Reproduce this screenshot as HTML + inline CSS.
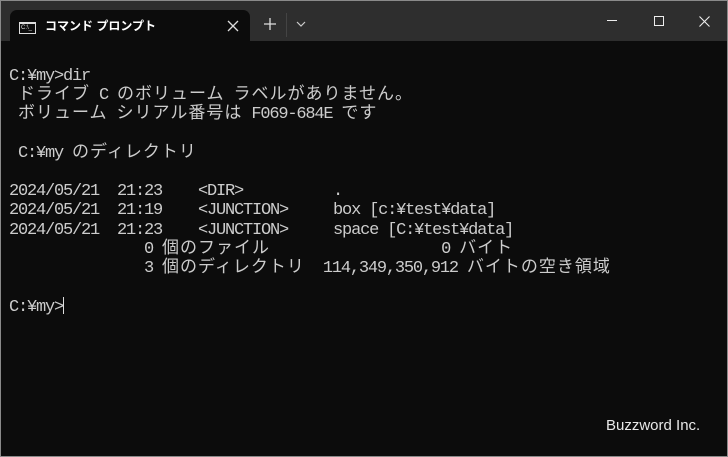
<!DOCTYPE html>
<html><head><meta charset="utf-8"><style>
html,body{margin:0;padding:0}
body{width:728px;height:457px;background:#0c0c0c;position:relative;overflow:hidden;font-family:"Liberation Mono","Noto Sans CJK JP",monospace}
.frame{position:absolute;left:0;top:0;width:726px;height:455px;border:1px solid #8a8a8a;}
.title{position:absolute;left:1px;top:1px;width:726px;height:40px;background:#2e2e2e}
.tab{position:absolute;left:9px;top:9px;width:240px;height:32px;background:#0c0c0c;border-radius:7px 7px 0 0}
.tab .t{position:absolute;left:35px;top:7px;color:#fff;font:bold 12px "Liberation Sans","Noto Sans CJK JP",sans-serif}
.icon{position:absolute;left:9px;top:12px;width:14px;height:9px;border:1px solid #ddd;border-top-width:2px;font:6px "Liberation Sans",sans-serif;color:#ddd;line-height:8px;padding-left:1px;box-sizing:content-box}
.con{position:absolute;left:9px;top:67px;color:#cccccc;font-size:17px;letter-spacing:-1.2px;font-family:"Liberation Mono","Noto Sans CJK JP",monospace}
.con div{height:19.2px;line-height:19.2px;overflow:visible;white-space:pre}
.j{display:inline-block;height:19.2px;vertical-align:top;font-size:17px;letter-spacing:1px;line-height:19.2px}
.cur{display:inline-block;width:1px;height:17px;background:#ddd;vertical-align:-3px}
.bz{position:absolute;left:606px;top:417px;color:#e8e8e8;font:15px "Liberation Sans",sans-serif}
</style></head><body>
<div class="frame"></div>
<div class="title">
 <div class="tab"><div class="icon">C:\_</div><div class="t">コマンド プロンプト</div>
 <svg style="position:absolute;left:217px;top:10px" width="12" height="12"><path d="M1 1L11 11M11 1L1 11" stroke="#ddd" stroke-width="1.3"/></svg></div>
 <svg style="position:absolute;left:263px;top:17px" width="12" height="12"><path d="M6 0V12M0 6H12" stroke="#ddd" stroke-width="1.3"/></svg>
 <div style="position:absolute;left:285px;top:12px;width:1px;height:24px;background:#444"></div>
 <svg style="position:absolute;left:295px;top:20px" width="10" height="6"><path d="M1 1L5 5L9 1" stroke="#ccc" fill="none" stroke-width="1.2"/></svg>
 <div style="position:absolute;left:606px;top:19px;width:10px;height:1px;background:#eee"></div>
 <div style="position:absolute;left:653px;top:15px;width:8px;height:8px;border:1px solid #eee"></div>
 <svg style="position:absolute;left:698px;top:15px" width="11" height="11"><path d="M0.5 0.5L10.5 10.5M10.5 0.5L0.5 10.5" stroke="#eee" stroke-width="1.1"/></svg>
</div>
<div class="con"><div>C:¥my&gt;dir</div><div> <span class="j">ドライブ</span> C <span class="j">のボリューム</span> <span class="j">ラベルがありません。</span></div><div> <span class="j">ボリューム</span> <span class="j">シリアル番号は</span> F069-684E <span class="j">です</span></div><div></div><div> C:¥my <span class="j">のディレクトリ</span></div><div></div><div>2024/05/21  21:23    &lt;DIR&gt;          .</div><div>2024/05/21  21:19    &lt;JUNCTION&gt;     box [c:¥test¥data]</div><div>2024/05/21  21:23    &lt;JUNCTION&gt;     space [C:¥test¥data]</div><div>               0 <span class="j">個のファイル</span>                   0 <span class="j">バイト</span></div><div>               3 <span class="j">個のディレクトリ</span>  114,349,350,912 <span class="j">バイトの空き領域</span></div><div></div><div>C:¥my&gt;<span class="cur"></span></div></div>
<div class="bz">Buzzword Inc.</div>
</body></html>
